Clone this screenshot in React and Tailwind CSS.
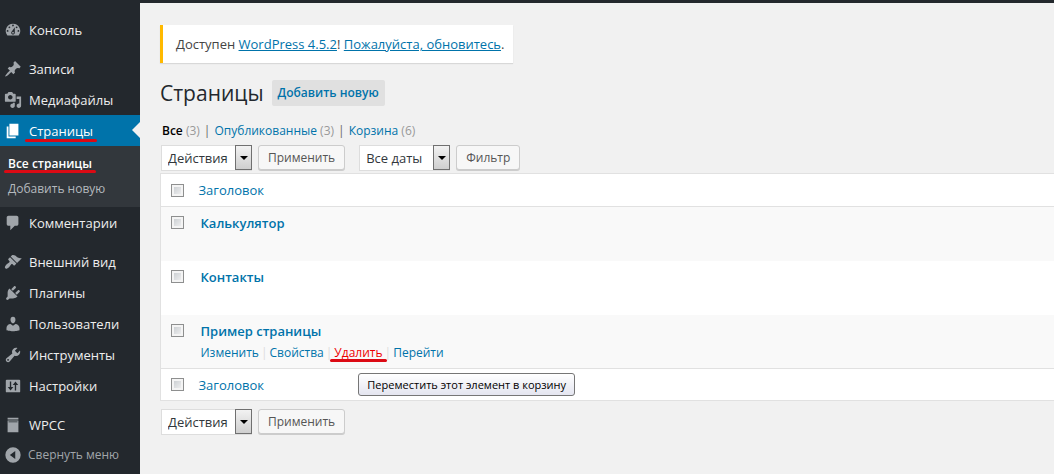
import clsx from "clsx";

const icons = {
  dashboard: "M3.76 16h12.48A7.998 7.998 0 0 0 10 3a7.998 7.998 0 0 0-6.24 13zM10 4c.55 0 1 .45 1 1s-.45 1-1 1-1-.45-1-1 .45-1 1-1zM6 6c.55 0 1 .45 1 1s-.45 1-1 1-1-.45-1-1 .45-1 1-1zm8 0c.55 0 1 .45 1 1s-.45 1-1 1-1-.45-1-1 .45-1 1-1zm-5.37 5.55L12 7v6c0 1.1-.9 2-2 2s-2-.9-2-2c0-.57.24-1.08.63-1.45zM4 10c.55 0 1 .45 1 1s-.45 1-1 1-1-.45-1-1 .45-1 1-1zm12 0c.55 0 1 .45 1 1s-.45 1-1 1-1-.45-1-1 .45-1 1-1zm-5 3c0-.55-.45-1-1-1s-1 .45-1 1 .45 1 1 1 1-.45 1-1z",
  post: "M10.44 3.02l1.82-1.82 6.36 6.35-1.83 1.82c-1.05-.68-2.48-.57-3.41.36l-.75.75c-.92.93-1.04 2.35-.35 3.41l-1.83 1.82-2.41-2.41-2.8 2.79c-.42.42-3.38 2.71-3.8 2.29s1.86-3.39 2.28-3.81l2.79-2.79L4.1 9.36l1.83-1.82c1.05.69 2.48.57 3.4-.36l.75-.75c.93-.92 1.05-2.35.36-3.41z",
  media: "M13 11V4c0-.55-.45-1-1-1h-1.67L9 1H5L3.67 3H2c-.55 0-1 .45-1 1v7c0 .55.45 1 1 1h10c.55 0 1-.45 1-1zM7 4.5c1.38 0 2.5 1.12 2.5 2.5S8.38 9.5 7 9.5 4.5 8.38 4.5 7 5.62 4.5 7 4.5zM14 6h5v10.5c0 1.38-1.12 2.5-2.5 2.5S14 17.88 14 16.5s1.12-2.5 2.5-2.5c.17 0 .34.02.5.05V9h-3V6zm-4 8.05V13h2v3.5c0 1.38-1.12 2.5-2.5 2.5S7 17.88 7 16.5 8.12 14 9.5 14c.17 0 .34.02.5.05z",
  page: "M6 15V2h10v13H6zm-1 1h8v2H3V5h2v11z",
  comments: "M5 2h9c1.1 0 2 .9 2 2v7c0 1.1-.9 2-2 2h-2l-5 5v-5H5c-1.1 0-2-.9-2-2V4c0-1.1.9-2 2-2z",
  appearance: "M14.48 11.06L7.41 3.99l1.5-1.5c.5-.56 2.3-.47 3.51.32 1.21.8 1.43 1.28 2.91 2.1 1.18.64 2.45 1.26 4.45.85zm-.71.71L6.7 4.7 4.93 6.47c-.39.39-.39 1.02 0 1.41l1.06 1.06c.39.39.39 1.03 0 1.42-.6.6-1.43 1.11-2.21 1.69-.35.26-.7.53-1.01.84C1.43 14.23.4 16.08 1.4 17.07c.99 1 2.84-.03 4.18-1.36.31-.31.58-.66.85-1.02.57-.78 1.08-1.61 1.69-2.21.39-.39 1.02-.39 1.41 0l1.06 1.06c.39.39 1.02.39 1.41 0z",
  plugins: "M13.11 4.36L9.87 7.6 8 5.73l3.24-3.24c.35-.34 1.05-.2 1.56.32.52.51.66 1.21.31 1.55zm-8 1.77l.91-1.12 9.01 9.01-1.19.84c-.71.71-2.63 1.16-3.82 1.16H6.14L4.9 17.26c-.59.59-1.54.59-2.12 0-.59-.58-.59-1.53 0-2.12l1.24-1.24v-3.88c0-1.13.4-3.19 1.09-3.89zm7.26 3.97l3.24-3.24c.34-.35 1.04-.21 1.55.31.52.51.66 1.21.31 1.55l-3.24 3.25z",
  users: "M10 9.25c-2.27 0-2.73-3.44-2.73-3.44C7 4.02 7.82 2 9.97 2c2.16 0 2.98 2.02 2.71 3.81 0 0-.41 3.44-2.68 3.44zm0 2.57L12.72 10c2.39 0 4.52 2.33 4.52 4.53v2.49s-3.65 1.13-7.24 1.13c-3.65 0-7.24-1.13-7.24-1.13v-2.49c0-2.25 1.94-4.48 4.47-4.48z",
  tools: "M16.68 9.77c-1.34 1.34-3.3 1.67-4.95.99l-5.41 6.52c-.99.99-2.59.99-3.58 0s-.99-2.59 0-3.57l6.52-5.42c-.68-1.65-.35-3.61.99-4.95 1.28-1.28 3.12-1.62 4.72-1.06l-2.89 2.89 2.82 2.82 2.86-2.87c.53 1.58.18 3.39-1.08 4.65zM3.81 16.21c.4.39 1.04.39 1.43 0 .4-.4.4-1.04 0-1.43-.39-.4-1.03-.4-1.43 0-.39.39-.39 1.03 0 1.43z",
  settings: "M3 3h14c.55 0 1 .45 1 1v12c0 .55-.45 1-1 1H3c-.55 0-1-.45-1-1V4c0-.55.45-1 1-1zM6.5 5v6H4.2l3.1 4 3.1-4H8V5zM12 15h1.500V9h2.300l-3.050-4-3.050 4H12z",
  wpcc: "M4 2h12v2H4zM4 5h12v13H4zM5 6v1h10V6z",
  collapse: "M10 1.500a8.500 8.500 0 1 0 0 17 8.500 8.500 0 1 0 0-17zM12.500 5.500v9L6.500 10z",
};

function Icon({ name }) {
  return (
    <svg viewBox="0 0 20 20" className="w-[18px] h-[18px] shrink-0" fill="currentColor" fillRule="evenodd" aria-hidden="true">
      <path d={icons[name]} />
    </svg>
  );
}

function MenuItem({ icon, label, current }) {
  return (
    <li>
      <a
        href="#"
        className={clsx(
          "relative flex items-center gap-[7px] h-[31px] pl-1",
          current ? "bg-[#0073aa] text-white" : "text-[#eee]"
        )}
      >
        <span className={clsx("flex", current ? "text-white" : "text-[#a0a5aa]")}>
          <Icon name={icon} />
        </span>
        {current ? <Marked>{label}</Marked> : <span>{label}</span>}
        {current && (
          <span className="absolute right-0 top-[7px] border-y-8 border-r-8 border-y-transparent border-r-[#f1f1f1]" />
        )}
      </a>
    </li>
  );
}

// red pen line under a word
function Marked({ children }) {
  return (
    <span className="relative">
      {children}
      <span className="absolute -left-1 -right-1 bottom-[-1px] h-[3px] rounded-full bg-[#dc0a14]" />
    </span>
  );
}

function Sidebar() {
  return (
    <nav className="w-[140px] shrink-0 bg-[#23282d] pt-[11px]">
      <ul>
        <MenuItem icon="dashboard" label="Консоль" />
      </ul>
      <ul className="mt-2">
        <MenuItem icon="post" label="Записи" />
        <MenuItem icon="media" label="Медиафайлы" />
        <MenuItem icon="page" label="Страницы" current />
      </ul>
      <ul className="bg-[#32373c] pt-[5px] pb-[6px] pl-2 text-xs leading-5">
        <li className="h-[25px] flex items-center">
          <a href="#" className="font-semibold text-white">
            <Marked>Все страницы</Marked>
          </a>
        </li>
        <li className="h-[25px] flex items-center">
          <a href="#" className="text-[#b4b9be]">Добавить новую</a>
        </li>
      </ul>
      <ul>
        <MenuItem icon="comments" label="Комментарии" />
      </ul>
      <ul className="mt-2">
        <MenuItem icon="appearance" label="Внешний вид" />
        <MenuItem icon="plugins" label="Плагины" />
        <MenuItem icon="users" label="Пользователи" />
        <MenuItem icon="tools" label="Инструменты" />
        <MenuItem icon="settings" label="Настройки" />
      </ul>
      <ul className="mt-2">
        <MenuItem icon="wpcc" label="WPCC" />
      </ul>
      <button type="button" className="flex items-center gap-[6px] h-[30px] pl-1 text-xs text-[#a0a5aa]">
        <Icon name="collapse" />
        Свернуть меню
      </button>
    </nav>
  );
}

function Select({ label, option }) {
  return (
    <div className="relative">
      <select
        aria-label={label}
        className="appearance-none block h-[26px] w-[91px] border border-[#ddd] bg-white pl-[6px] text-[13px] text-[#32373c]"
      >
        <option>{option}</option>
      </select>
      <span className="pointer-events-none absolute right-0 top-0 flex h-[25px] w-[17px] items-center justify-center border border-[#707070] bg-linear-to-b from-[#f2f2f2] to-[#cfcfcf]">
        <span className="border-x-4 border-t-4 border-x-transparent border-t-black" />
      </span>
    </div>
  );
}

function Button({ children }) {
  return (
    <button
      type="button"
      className="h-[25px] rounded-[3px] border border-[#ccc] bg-[#f7f7f7] px-[9px] text-xs text-[#555] shadow-[0_1px_0_#ccc]"
    >
      {children}
    </button>
  );
}

function Check({ label }) {
  return (
    <input
      type="checkbox"
      aria-label={label}
      className="appearance-none block w-[13px] h-[13px] border border-[#8e8f8f] bg-linear-to-br from-[#c4c8cc] to-[#f6f6f6] shadow-[inset_0_0_0_2px_#f4f4f4]"
    />
  );
}

function Row({ title, actions, striped }) {
  return (
    <tr className={clsx("h-[54px] align-top", striped && "bg-[#f9f9f9]")}>
      <td className="pl-[10px] pt-[9px]"><Check label={"Выбрать " + title} /></td>
      <td className="pl-[11px] pt-[6px]">
        <a href="#" className="block font-semibold text-[#0073aa]">{title}</a>
        {actions}
      </td>
    </tr>
  );
}

function HeadCells() {
  return (
    <>
      <th className="w-[29px] pl-[10px]"><Check label="Выделить все" /></th>
      <th className="pl-[9px] text-left font-normal"><a href="#" className="text-[#0073aa]">Заголовок</a></th>
    </>
  );
}

function RowActions() {
  const bar = <span className="text-[#ddd]">|</span>;
  return (
    <div className="flex gap-[2px] pt-[2px] text-xs leading-5 text-[#0073aa]">
      <a href="#">Изменить</a>{bar}
      <a href="#">Свойства</a>{bar}
      <a href="#" className="relative text-[#e00]">
        <Marked>Удалить</Marked>
        <span
          role="tooltip"
          className="absolute left-6 top-[30px] z-10 rounded-[3px] border border-[#767676] bg-linear-to-b from-white to-[#e4e5f0] px-2 text-[11px] leading-[21px] whitespace-nowrap text-black"
        >
          Переместить этот элемент в корзину
        </span>
      </a>{bar}
      <a href="#">Перейти</a>
    </div>
  );
}

export default function App() {
  return (
    <div className="flex min-h-screen flex-col bg-[#f1f1f1] font-['Open_Sans',sans-serif] text-[13px] leading-5 text-[#444]">
      <div className="h-[3px] bg-[#23282d]" />
      <div className="flex grow">
        <Sidebar />
        <main className="min-w-0 grow pl-5 pt-[22px]">
          <div className="w-fit border-l-[3px] border-[#ffb900] bg-white py-[9px] pl-[13px] pr-[9px] shadow-[0_1px_1px_rgba(0,0,0,0.1)]">
            Доступен <a href="#" className="text-[#0073aa] underline">WordPress 4.5.2</a>!{" "}
            <a href="#" className="text-[#0073aa] underline">Пожалуйста, обновитесь</a>.
          </div>

          <div className="mt-4 flex items-center gap-2">
            <h1 className="text-[21px] leading-7 text-[#23282d]">Страницы</h1>
            <a href="#" className="rounded-xs bg-[#e0e0e0] px-[6px] py-[3px] text-xs leading-5 font-semibold text-[#0073aa]">Добавить новую</a>
          </div>

          <ul className="mt-[14px] flex gap-1 pl-[2px] text-xs leading-5 text-[#999]">
            <li><a href="#" className="font-semibold text-black">Все</a> (3)</li>
            <li className="text-[#666]">|</li>
            <li><a href="#" className="text-[#0073aa]">Опубликованные</a> (3)</li>
            <li className="text-[#666]">|</li>
            <li><a href="#" className="text-[#0073aa]">Корзина</a> (6)</li>
          </ul>

          <div className="mt-1 flex pl-px">
            <div className="flex gap-[6px]">
              <Select label="Действия" option="Действия" />
              <Button>Применить</Button>
            </div>
            <div className="ml-[14px] flex gap-[6px]">
              <Select label="Дата" option="Все даты" />
              <Button>Фильтр</Button>
            </div>
          </div>

          <table className="mt-[2px] w-full border border-r-0 border-[#e1e1e1] bg-white">
            <thead>
              <tr className="h-[33px] border-b border-[#e1e1e1]"><HeadCells /></tr>
            </thead>
            <tbody>
              <Row title="Калькулятор" striped />
              <Row title="Контакты" />
              <Row title="Пример страницы" striped actions={<RowActions />} />
            </tbody>
            <tfoot>
              <tr className="h-[32px] border-t border-[#e1e1e1]"><HeadCells /></tr>
            </tfoot>
          </table>

          <div className="mt-2 flex gap-[6px] pl-px">
            <Select label="Действия" option="Действия" />
            <Button>Применить</Button>
          </div>
        </main>
      </div>
    </div>
  );
}
